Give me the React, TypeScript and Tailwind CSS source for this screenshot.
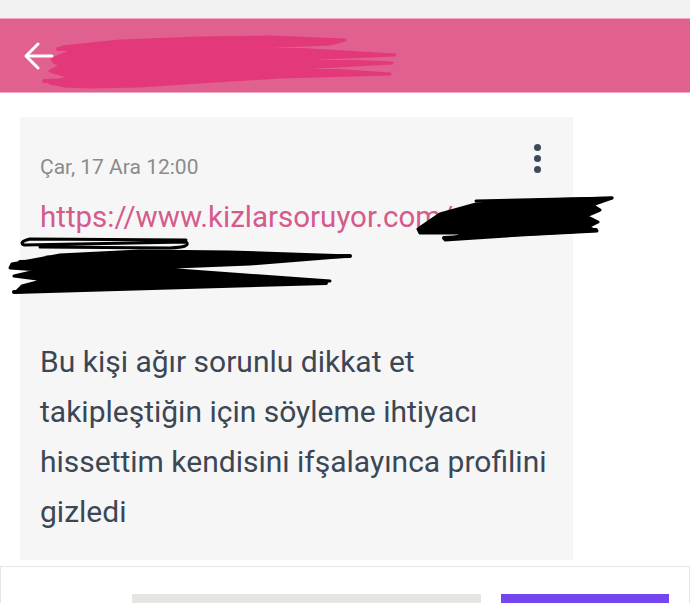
import React from 'react';

const bodyLines = [
  'Bu kişi ağır sorunlu dikkat et',
  'takipleştiğin için söyleme ihtiyacı',
  'hissettim kendisini ifşalayınca profilini',
  'gizledi',
];

const PinkScribble = () => (
  <svg className="absolute left-0 top-0" width="420" height="75" viewBox="0 0 420 75">
    <g fill="#e3397a" stroke="#e3397a" strokeLinecap="round" strokeLinejoin="round">
      <path d="M62 28 L120 22 L200 19 L270 18 L345 21 L330 25 L260 28 L395 36 L300 40 L392 44 L300 49 L390 55 L280 58 L200 63 L140 67 L90 68 L65 67 L50 64 L70 58 L50 52 L60 47 L52 40 L70 33 Z" strokeWidth="3" />
      <path d="M44 62 L130 59" strokeWidth="4" fill="none" />
      <path d="M58 30 L210 26" strokeWidth="4" fill="none" />
      <path d="M55 43 L180 42" strokeWidth="5" fill="none" />
    </g>
  </svg>
);

const BlackScribbles = () => (
  <svg className="absolute left-0 top-0 pointer-events-none" width="690" height="603" viewBox="0 0 690 603">
    <g fill="#000" stroke="#000" strokeLinecap="round" strokeLinejoin="round">
      {/* right of link */}
      <path d="M418 229 L440 214 L476 204 L540 200 L612 198 L592 205 L600 210 L586 216 L598 222 L588 227 L597 231 L520 235 L445 240 L470 233 L420 233 Z" strokeWidth="3" />
      <path d="M476 201 L612 198" strokeWidth="3" fill="none" />
      <path d="M444 238 L596 230" strokeWidth="4" fill="none" />
      {/* loop */}
      <path d="M186 240 L30 239 Q18 242 24 245 L186 242 Q192 247 170 248 L40 247" strokeWidth="3" fill="none" />
      {/* under link */}
      <path d="M12 264 L60 255 L140 251 L230 252 L350 256 L250 264 L150 268 L330 281 L200 285 L100 288 L16 292 L22 286 L45 280 L14 276 L40 270 L10 268 Z" strokeWidth="3" />
      <path d="M14 292 L326 283" strokeWidth="4" fill="none" />
      <path d="M20 262 L350 256" strokeWidth="4" fill="none" />
    </g>
  </svg>
);

export default function App() {
  return (
    <div className="relative h-[603px] w-[690px] overflow-hidden bg-white font-['Roboto',sans-serif]">
      <div className="h-[18px] bg-[#f2f2f2]" />
      <header className="relative flex h-[75px] items-center border-y border-[#f0a9c2] bg-[#e0608f] px-[24px]">
        <PinkScribble />
        <svg className="relative" width="30" height="30" viewBox="0 0 30 30" fill="none" stroke="#fff" strokeWidth="3" strokeLinecap="round" strokeLinejoin="round">
          <path d="M28 15 H3" />
          <path d="M14 3 L2 15 L14 27" />
        </svg>
      </header>

      <div className="px-[20px] pt-[24px]">
        <div className="h-[443px] w-[553px] bg-[#f6f6f6] px-[20px] pt-[27px]">
          <div className="flex items-start justify-between pr-[12px]">
            <span className="mt-[10px] text-[21px] leading-[26px] text-[#8b8b8b]">Çar, 17 Ara 12:00</span>
            <div className="flex flex-col items-center gap-[4px]">
              <span className="h-[7px] w-[7px] rounded-full bg-[#3d4a59]" />
              <span className="h-[7px] w-[7px] rounded-full bg-[#3d4a59]" />
              <span className="h-[7px] w-[7px] rounded-full bg-[#3d4a59]" />
            </div>
          </div>
          <p className="mt-[15px] whitespace-nowrap text-[29.5px] leading-[44px] text-[#d45b8c]">
            https://www.kizlarsoruyor.com/s
            <br />
            e
          </p>
          <div className="mt-[54px] text-[30px] leading-[50px] text-[#3b4755]">
            {bodyLines.map((line) => (
              <div key={line}>{line}</div>
            ))}
          </div>
        </div>
      </div>

      <div className="mt-[6px] flex h-[60px] items-start gap-[20px] border-x border-t border-[#e6e6e6] bg-white pl-[131px] pt-[27px]">
        <div className="h-[30px] w-[349px] bg-[#e6e5e2]" />
        <div className="h-[30px] w-[168px] bg-[#7446f0]" />
      </div>

      <BlackScribbles />
    </div>
  );
}
